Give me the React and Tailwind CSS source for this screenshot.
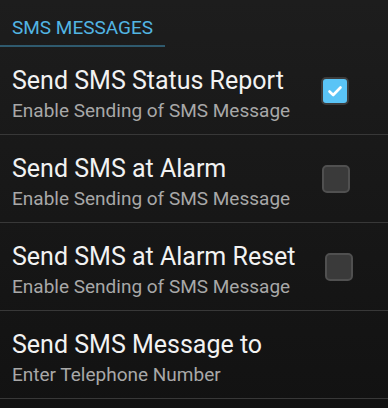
import React, { useState } from "react";

const prefs = [
  { title: "Send SMS Status Report", summary: "Enable Sending of SMS Message", checkbox: true, checked: true, right: "mr-[39px]" },
  { title: "Send SMS at Alarm", summary: "Enable Sending of SMS Message", checkbox: true, checked: false, right: "mr-[38px]" },
  { title: "Send SMS at Alarm Reset", summary: "Enable Sending of SMS Message", checkbox: true, checked: false, right: "mr-[35px]" },
  { title: "Send SMS Message to", summary: "Enter Telephone Number", checkbox: false },
];

const CheckBox = ({ checked, onToggle }) => (
  <button
    onClick={onToggle}
    className={`w-[28px] h-[28px] rounded-[5px] border-2 flex items-center justify-center ${
      checked ? "bg-[#5ac4f6] border-[#3c3c3c]" : "bg-[#3a3a3a] border-[#505050]"
    }`}
  >
    {checked && (
      <svg width="16" height="16" viewBox="0 0 16 16">
        <path d="M2.5 8.5 L6.2 12 L13.5 4.5" fill="none" stroke="#ffffff" strokeWidth="2.6" strokeLinecap="round" strokeLinejoin="round" />
      </svg>
    )}
  </button>
);

const App = () => {
  const [checks, setChecks] = useState(prefs.map((p) => p.checked));

  const toggle = (idx) => {
    setChecks((prev) => prev.map((c, i) => (i === idx ? !c : c)));
  };

  return (
    <div
      className="w-[388px] h-[408px] overflow-hidden bg-gradient-to-b from-[#1d1d1d] to-[#121212]"
      style={{ fontFamily: "Roboto, 'Noto Sans', sans-serif" }}
    >
      <div className="pt-[16px]">
        <div className="pl-[12px] text-[19px] leading-[24px] text-[#52b5e3]">SMS MESSAGES</div>
        <div className="mt-[5px] w-[165px] h-[2px] bg-[#2f5a6e]" />
      </div>

      {prefs.map((p, idx) => (
        <div key={p.title} className="h-[88px] flex items-center border-b border-[#383838]">
          <div className="flex-1 pl-[12px] pt-[19px] self-start">
            <div className="text-[25px] leading-[29px] text-[#f2f2f2]">{p.title}</div>
            <div className="mt-[4px] text-[19px] leading-[23px] text-[#a8a8a8]">{p.summary}</div>
          </div>
          {p.checkbox && (
            <div className={p.right}>
              <CheckBox checked={checks[idx]} onToggle={() => toggle(idx)} />
            </div>
          )}
        </div>
      ))}
    </div>
  );
};

export default App;
